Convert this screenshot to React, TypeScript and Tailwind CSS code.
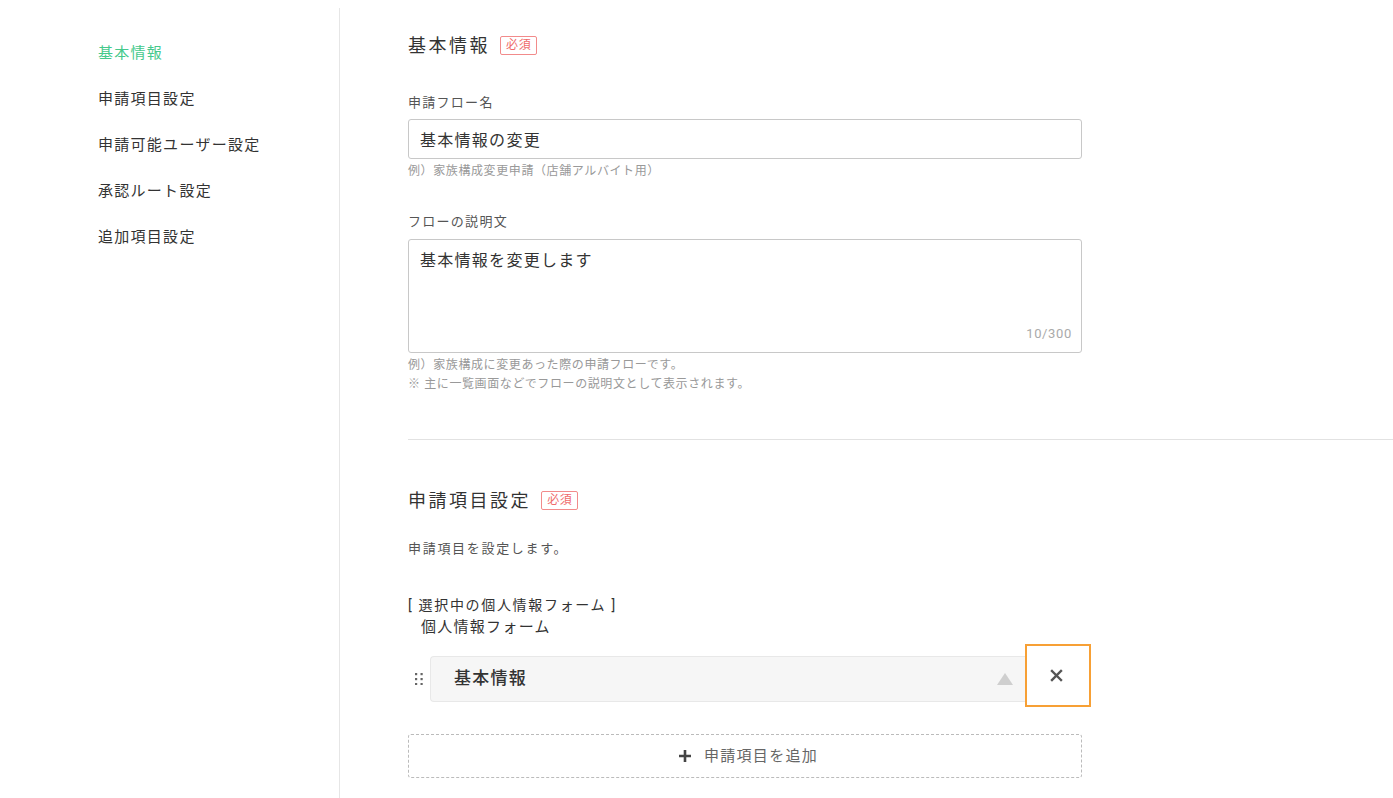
import { useState } from "react";

const navItems = ["基本情報", "申請項目設定", "申請可能ユーザー設定", "承認ルート設定", "追加項目設定"];

function RequiredBadge() {
  return (
    <span className="inline-flex h-[19px] items-center rounded-[2px] border border-[#f28b8b] px-[5px] text-[12px] leading-none tracking-[0.05em] text-[#ef6b6b]">
      必須
    </span>
  );
}

function DragHandle() {
  return (
    <svg width="8" height="12" viewBox="0 0 8 12" className="fill-[#666]">
      {[0, 5, 10].map((y) => (
        <g key={y}>
          <rect x="0" y={y} width="2.2" height="2.2" />
          <rect x="5.5" y={y} width="2.2" height="2.2" />
        </g>
      ))}
    </svg>
  );
}

export default function App() {
  const [flowName, setFlowName] = useState("基本情報の変更");
  const [description, setDescription] = useState("基本情報を変更します");

  return (
    <div className="flex min-h-[798px] bg-white pt-2 tracking-[0.08em] text-[#333] [font-family:Roboto,'Noto_Sans_CJK_JP',sans-serif]">
      {/* side navigation */}
      <nav className="w-[340px] shrink-0 border-r border-[#e6e6e6] pl-[98px] pt-[22px]">
        {navItems.map((item, i) => (
          <div
            key={item}
            className={`flex h-[46px] items-center text-[15px] ${i === 0 ? "text-[#45c98c]" : "text-[#333]"}`}
          >
            {item}
          </div>
        ))}
      </nav>

      <main className="flex-1 pl-[68px] pt-[23px]">
        {/* basic info */}
        <section className="w-[674px]">
          <div className="flex h-7 items-center gap-[10px]">
            <h2 className="text-[18px] tracking-[0.14em] text-[#333]">基本情報</h2>
            <RequiredBadge />
          </div>

          <label className="mt-[34px] block text-[13px] leading-5 text-[#555]">申請フロー名</label>
          <input
            value={flowName}
            onChange={(e) => setFlowName(e.target.value)}
            className="mt-1.5 block h-10 w-full rounded-[3px] border border-[#c8c8c8] px-[11px] text-[16px] text-[#333] outline-none"
          />
          <p className="mt-[3px] text-[12px] leading-[18px] tracking-[0.05em] text-[#999]">例）家族構成変更申請（店舗アルバイト用）</p>

          <label className="mt-8 block text-[13px] leading-5 text-[#555]">フローの説明文</label>
          <div className="relative mt-[7px] h-[114px] rounded-[3px] border border-[#c8c8c8]">
            <textarea
              value={description}
              onChange={(e) => setDescription(e.target.value)}
              className="h-full w-full resize-none px-[11px] pt-[9px] text-[16px] leading-6 text-[#333] outline-none"
            />
            <span className="absolute bottom-[9px] right-[9px] text-[13px] tracking-[0.05em] text-[#aaa]">
              {description.length}/300
            </span>
          </div>
          <p className="mt-[3px] text-[12px] leading-[19px] tracking-[0.05em] text-[#999]">例）家族構成に変更あった際の申請フローです。</p>
          <p className="text-[12px] leading-[19px] tracking-[0.05em] text-[#999]">※ 主に一覧画面などでフローの説明文として表示されます。</p>
        </section>

        <hr className="mt-[45px] border-t border-[#e2e2e2]" />

        {/* request items */}
        <section className="mt-[46px]">
          <div className="flex h-7 items-center gap-[10px]">
            <h2 className="text-[18px] tracking-[0.14em] text-[#333]">申請項目設定</h2>
            <RequiredBadge />
          </div>
          <p className="mt-[25px] text-[13px] leading-5 tracking-[0.13em] text-[#555]">申請項目を設定します。</p>

          <p className="mt-[35px] text-[14px] leading-[22px] tracking-[0.12em] text-[#333]">[ 選択中の個人情報フォーム ]</p>
          <p className="pl-[13px] text-[15px] leading-[22px] text-[#333]">個人情報フォーム</p>

          <div className="mt-[6px] flex w-[683px] items-start">
            <div className="mt-[29px] flex w-[22px] justify-start pl-[7px]">
              <DragHandle />
            </div>
            <div className="mt-[12px] flex h-[46px] flex-1 items-center justify-between rounded-l-[4px] border border-r-0 border-[#e8e8e8] bg-[#f6f6f6] pl-[23px] pr-[12px]">
              <span className="text-[17px] font-medium text-[#333]">基本情報</span>
              <svg width="16" height="12" viewBox="0 0 16 12" className="fill-[#cfcfcf]">
                <path d="M8 0 L16 12 L0 12 Z" />
              </svg>
            </div>
            <button className="flex h-[63px] w-[66px] items-center justify-center border-2 border-[#f7a035] bg-white pr-[4px]">
              <svg width="13" height="13" viewBox="0 0 13 13" className="stroke-[#555]" strokeWidth="2.4" strokeLinecap="square">
                <path d="M2 2 L11 11 M11 2 L2 11" />
              </svg>
            </button>
          </div>

          <button className="mt-[27px] flex h-[44px] w-[674px] items-center justify-center gap-[13px] rounded-[3px] border border-dashed border-[#bbb] pl-[7px] text-[15px] text-[#666]">
            <svg width="12" height="12" viewBox="0 0 12 12" className="stroke-[#444]" strokeWidth="2.6">
              <path d="M6 0 V12 M0 6 H12" />
            </svg>
            申請項目を追加
          </button>
        </section>
      </main>
    </div>
  );
}
